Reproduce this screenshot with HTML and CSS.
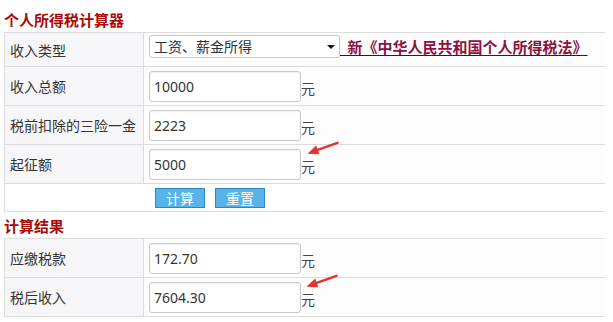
FILE: index.html
```html
<!DOCTYPE html>
<html lang="zh-CN">
<head>
<meta charset="utf-8">
<title>个人所得税计算器</title>
<link rel="stylesheet" href="styles.css">
</head>
<body>
<div class="page">
  <h2 class="title">个人所得税计算器</h2>
  <div class="grid">
    <div class="row row-first">
      <div class="label">收入类型</div>
      <div class="value">
        <span class="select-wrap"><select class="select"><option>工资、薪金所得</option></select></span><a class="law" href="#">&ensp;新《中华人民共和国个人所得税法》</a>
      </div>
    </div>
    <div class="row">
      <div class="label">收入总额</div>
      <div class="value"><input class="field" type="text" value="10000"><span class="unit">元</span></div>
    </div>
    <div class="row">
      <div class="label">税前扣除的三险一金</div>
      <div class="value"><input class="field" type="text" value="2223"><span class="unit">元</span></div>
    </div>
    <div class="row">
      <div class="label">起征额</div>
      <div class="value"><input class="field" type="text" value="5000"><span class="unit">元</span></div>
    </div>
    <div class="row row-buttons">
      <button class="btn" type="button">计算</button>
      <button class="btn" type="button">重置</button>
    </div>
  </div>

  <h2 class="title title-result">计算结果</h2>
  <div class="grid">
    <div class="row">
      <div class="label">应缴税款</div>
      <div class="value"><input class="field" type="text" value="172.70"><span class="unit">元</span></div>
    </div>
    <div class="row">
      <div class="label">税后收入</div>
      <div class="value"><input class="field" type="text" value="7604.30"><span class="unit">元</span></div>
    </div>
  </div>

  <svg class="arrow arrow-1" width="34" height="16" viewBox="0 0 34 16" aria-hidden="true">
    <path d="M31.5 1.8 L11 9.2" stroke="#e8312b" stroke-width="2.4" stroke-linecap="round" fill="none"/>
    <path d="M1.5 12.8 L10.2 4.6 L13.4 13.2 Z" fill="#e8312b"/>
  </svg>
  <svg class="arrow arrow-2" width="34" height="16" viewBox="0 0 34 16" aria-hidden="true">
    <path d="M31.5 1.8 L11 9.2" stroke="#e8312b" stroke-width="2.4" stroke-linecap="round" fill="none"/>
    <path d="M1.5 12.8 L10.2 4.6 L13.4 13.2 Z" fill="#e8312b"/>
  </svg>
</div>
</body>
</html>
```

FILE: styles.css
```css
html, body {
  margin: 0;
  padding: 0;
  background: #ffffff;
}

body {
  font-family: "Noto Sans", "Noto Sans CJK SC", sans-serif;
  font-size: 14px;
  color: #333333;
}

.page {
  position: relative;
  width: 613px;
  height: 322px;
  padding-left: 4px;
  box-sizing: border-box;
  overflow: hidden;
}

.title {
  margin: 0;
  height: 32px;
  box-sizing: border-box;
  padding-top: 9px;
  font-family: "Noto Sans CJK SC", sans-serif;
  font-size: 15px;
  line-height: 22px;
  font-weight: 700;
  color: #a80a0a;
}

.title-result {
  height: 26px;
  padding-top: 3px;
}

.grid {
  width: 600px;
  border-top: 1px solid #dcdcdc;
  border-left: 1px solid #dcdcdc;
  display: flex;
  flex-direction: column;
}

.row {
  display: flex;
  height: 39px;
  box-sizing: border-box;
  border-bottom: 1px solid #dcdcdc;
}

.row-first {
  height: 34px;
}

.label {
  width: 139px;
  flex: none;
  border-right: 1px solid #dcdcdc;
  background: #f6f6f8;
  display: flex;
  align-items: center;
  padding-left: 5px;
  box-sizing: border-box;
  font-family: "Noto Sans CJK SC", sans-serif;
  font-size: 14px;
  color: #333333;
}

.value {
  flex: 1;
  display: flex;
  align-items: center;
  padding-left: 5px;
  background: #fdfdfe;
}

.row-first .value {
  align-items: flex-start;
  padding-top: 2px;
}

.select-wrap {
  position: relative;
  display: inline-block;
  width: 191px;
  height: 23px;
}

.select-wrap::after {
  content: "";
  position: absolute;
  right: 5px;
  top: 10px;
  border-left: 4px solid transparent;
  border-right: 4px solid transparent;
  border-top: 4px solid #111111;
}

.select {
  appearance: none;
  -webkit-appearance: none;
  width: 191px;
  height: 23px;
  margin: 0;
  box-sizing: border-box;
  border: 1px solid #c8c8c8;
  border-radius: 3px;
  background: #ffffff;
  padding: 0 0 0 4px;
  font-family: "Noto Sans CJK SC", sans-serif;
  font-size: 14px;
  color: #333333;
  line-height: 21px;
}

.law {
  margin-top: 3px;
  font-family: "Noto Sans CJK SC", sans-serif;
  font-size: 15px;
  font-weight: 700;
  line-height: 18px;
  color: #8c1240;
  text-decoration: underline;
  text-decoration-color: #222222;
  text-underline-offset: 2px;
  white-space: nowrap;
}

.field {
  width: 152px;
  height: 31px;
  margin: 0;
  box-sizing: border-box;
  border: 1px solid #c9c9c9;
  border-radius: 3px;
  box-shadow: inset 0 1px 2px rgba(0, 0, 0, 0.06);
  background: #ffffff;
  padding: 0 0 0 4px;
  font-family: "Noto Sans", sans-serif;
  font-size: 14px;
  color: #333333;
}

.unit {
  padding-top: 3px;
  font-family: "Noto Sans CJK SC", sans-serif;
  font-size: 14px;
  color: #444444;
}

.row-buttons {
  height: 28px;
  background: #ffffff;
  align-items: center;
  gap: 10px;
  padding-left: 150px;
}

.btn {
  width: 50px;
  height: 20px;
  margin: 0;
  padding: 0;
  box-sizing: border-box;
  border: 1px solid #2e86bf;
  background: #58b4e8;
  color: #ffffff;
  font-family: "Noto Sans CJK SC", sans-serif;
  font-size: 14px;
  line-height: 18px;
  cursor: pointer;
}

.arrow {
  position: absolute;
}

.arrow-1 {
  left: 306px;
  top: 141px;
}

.arrow-2 {
  left: 305px;
  top: 274px;
}
```
